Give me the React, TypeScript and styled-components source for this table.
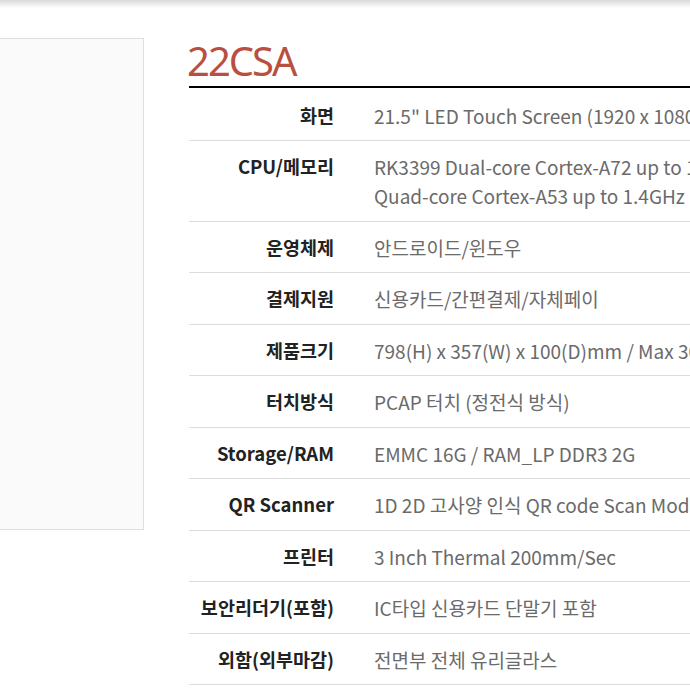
import styled, { createGlobalStyle } from 'styled-components';

const GlobalStyle = createGlobalStyle`
  html, body {
    margin: 0;
    padding: 0;
    background: #fff;
    overflow: hidden;
  }
  body {
    font-family: "Noto Sans CJK KR", "Noto Sans", sans-serif;
  }
`;

const specs: { label: string; value: string[] }[] = [
  { label: '화면', value: ['21.5" LED Touch Screen (1920 x 1080)'] },
  {
    label: 'CPU/메모리',
    value: [
      'RK3399 Dual-core Cortex-A72 up to 1.8GHz',
      'Quad-core Cortex-A53 up to 1.4GHz',
    ],
  },
  { label: '운영체제', value: ['안드로이드/윈도우'] },
  { label: '결제지원', value: ['신용카드/간편결제/자체페이'] },
  { label: '제품크기', value: ['798(H) x 357(W) x 100(D)mm / Max 30kg'] },
  { label: '터치방식', value: ['PCAP 터치 (정전식 방식)'] },
  { label: 'Storage/RAM', value: ['EMMC 16G / RAM_LP DDR3 2G'] },
  { label: 'QR Scanner', value: ['1D 2D 고사양 인식 QR code Scan Module'] },
  { label: '프린터', value: ['3 Inch Thermal 200mm/Sec'] },
  { label: '보안리더기(포함)', value: ['IC타입 신용카드 단말기 포함'] },
  { label: '외함(외부마감)', value: ['전면부 전체 유리글라스'] },
];

const Page = styled.div`
  position: relative;
  width: 690px;
  height: 690px;
  overflow: hidden;
`;

const TopShade = styled.div`
  height: 8px;
  background: linear-gradient(#d9d9d9, #fff);
`;

const Body = styled.div`
  display: flex;
  align-items: flex-start;
  gap: 45px;
  padding-top: 30px;
  margin-left: -60px;
`;

const Photo = styled.div`
  flex: 0 0 202px;
  height: 490px;
  background: #fafafa;
  border: 1px solid #dedede;
`;

const Info = styled.div`
  flex: 0 0 560px;
`;

const Title = styled.h2`
  margin: 0 0 0 -2px;
  padding-left: 0;
  height: 48px;
  font-family: "Noto Sans", sans-serif;
  font-size: 40px;
  font-weight: 400;
  line-height: 46px;
  color: #b9503f;
  letter-spacing: -2px;
`;

const Rule = styled.div`
  height: 2px;
  background: #000;
`;

const Table = styled.div`
  display: flex;
  flex-direction: column;
`;

const Row = styled.div<{ $first?: boolean }>`
  display: grid;
  grid-template-columns: 145px 1fr;
  gap: 40px;
  padding: ${(p) => (p.$first ? '12.5px' : '11px')} 0 10.5px;
  border-bottom: 1px solid #dcdcdc;
  line-height: 29px;
`;

const Label = styled.div`
  text-align: right;
  font-size: 18.5px;
  font-weight: 700;
  color: #222;
  white-space: nowrap;
`;

const Value = styled.div`
  font-size: 19px;
  color: #6a6a6a;
  white-space: nowrap;
`;

export default function App() {
  return (
    <Page>
      <GlobalStyle />
      <TopShade />
      <Body>
        <Photo />
        <Info>
          <Title>22CSA</Title>
          <Rule />
          <Table>
            {specs.map((s, i) => (
              <Row key={s.label} $first={i === 0}>
                <Label>{s.label}</Label>
                <Value>
                  {s.value.map((v) => (
                    <div key={v}>{v}</div>
                  ))}
                </Value>
              </Row>
            ))}
          </Table>
        </Info>
      </Body>
    </Page>
  );
}
